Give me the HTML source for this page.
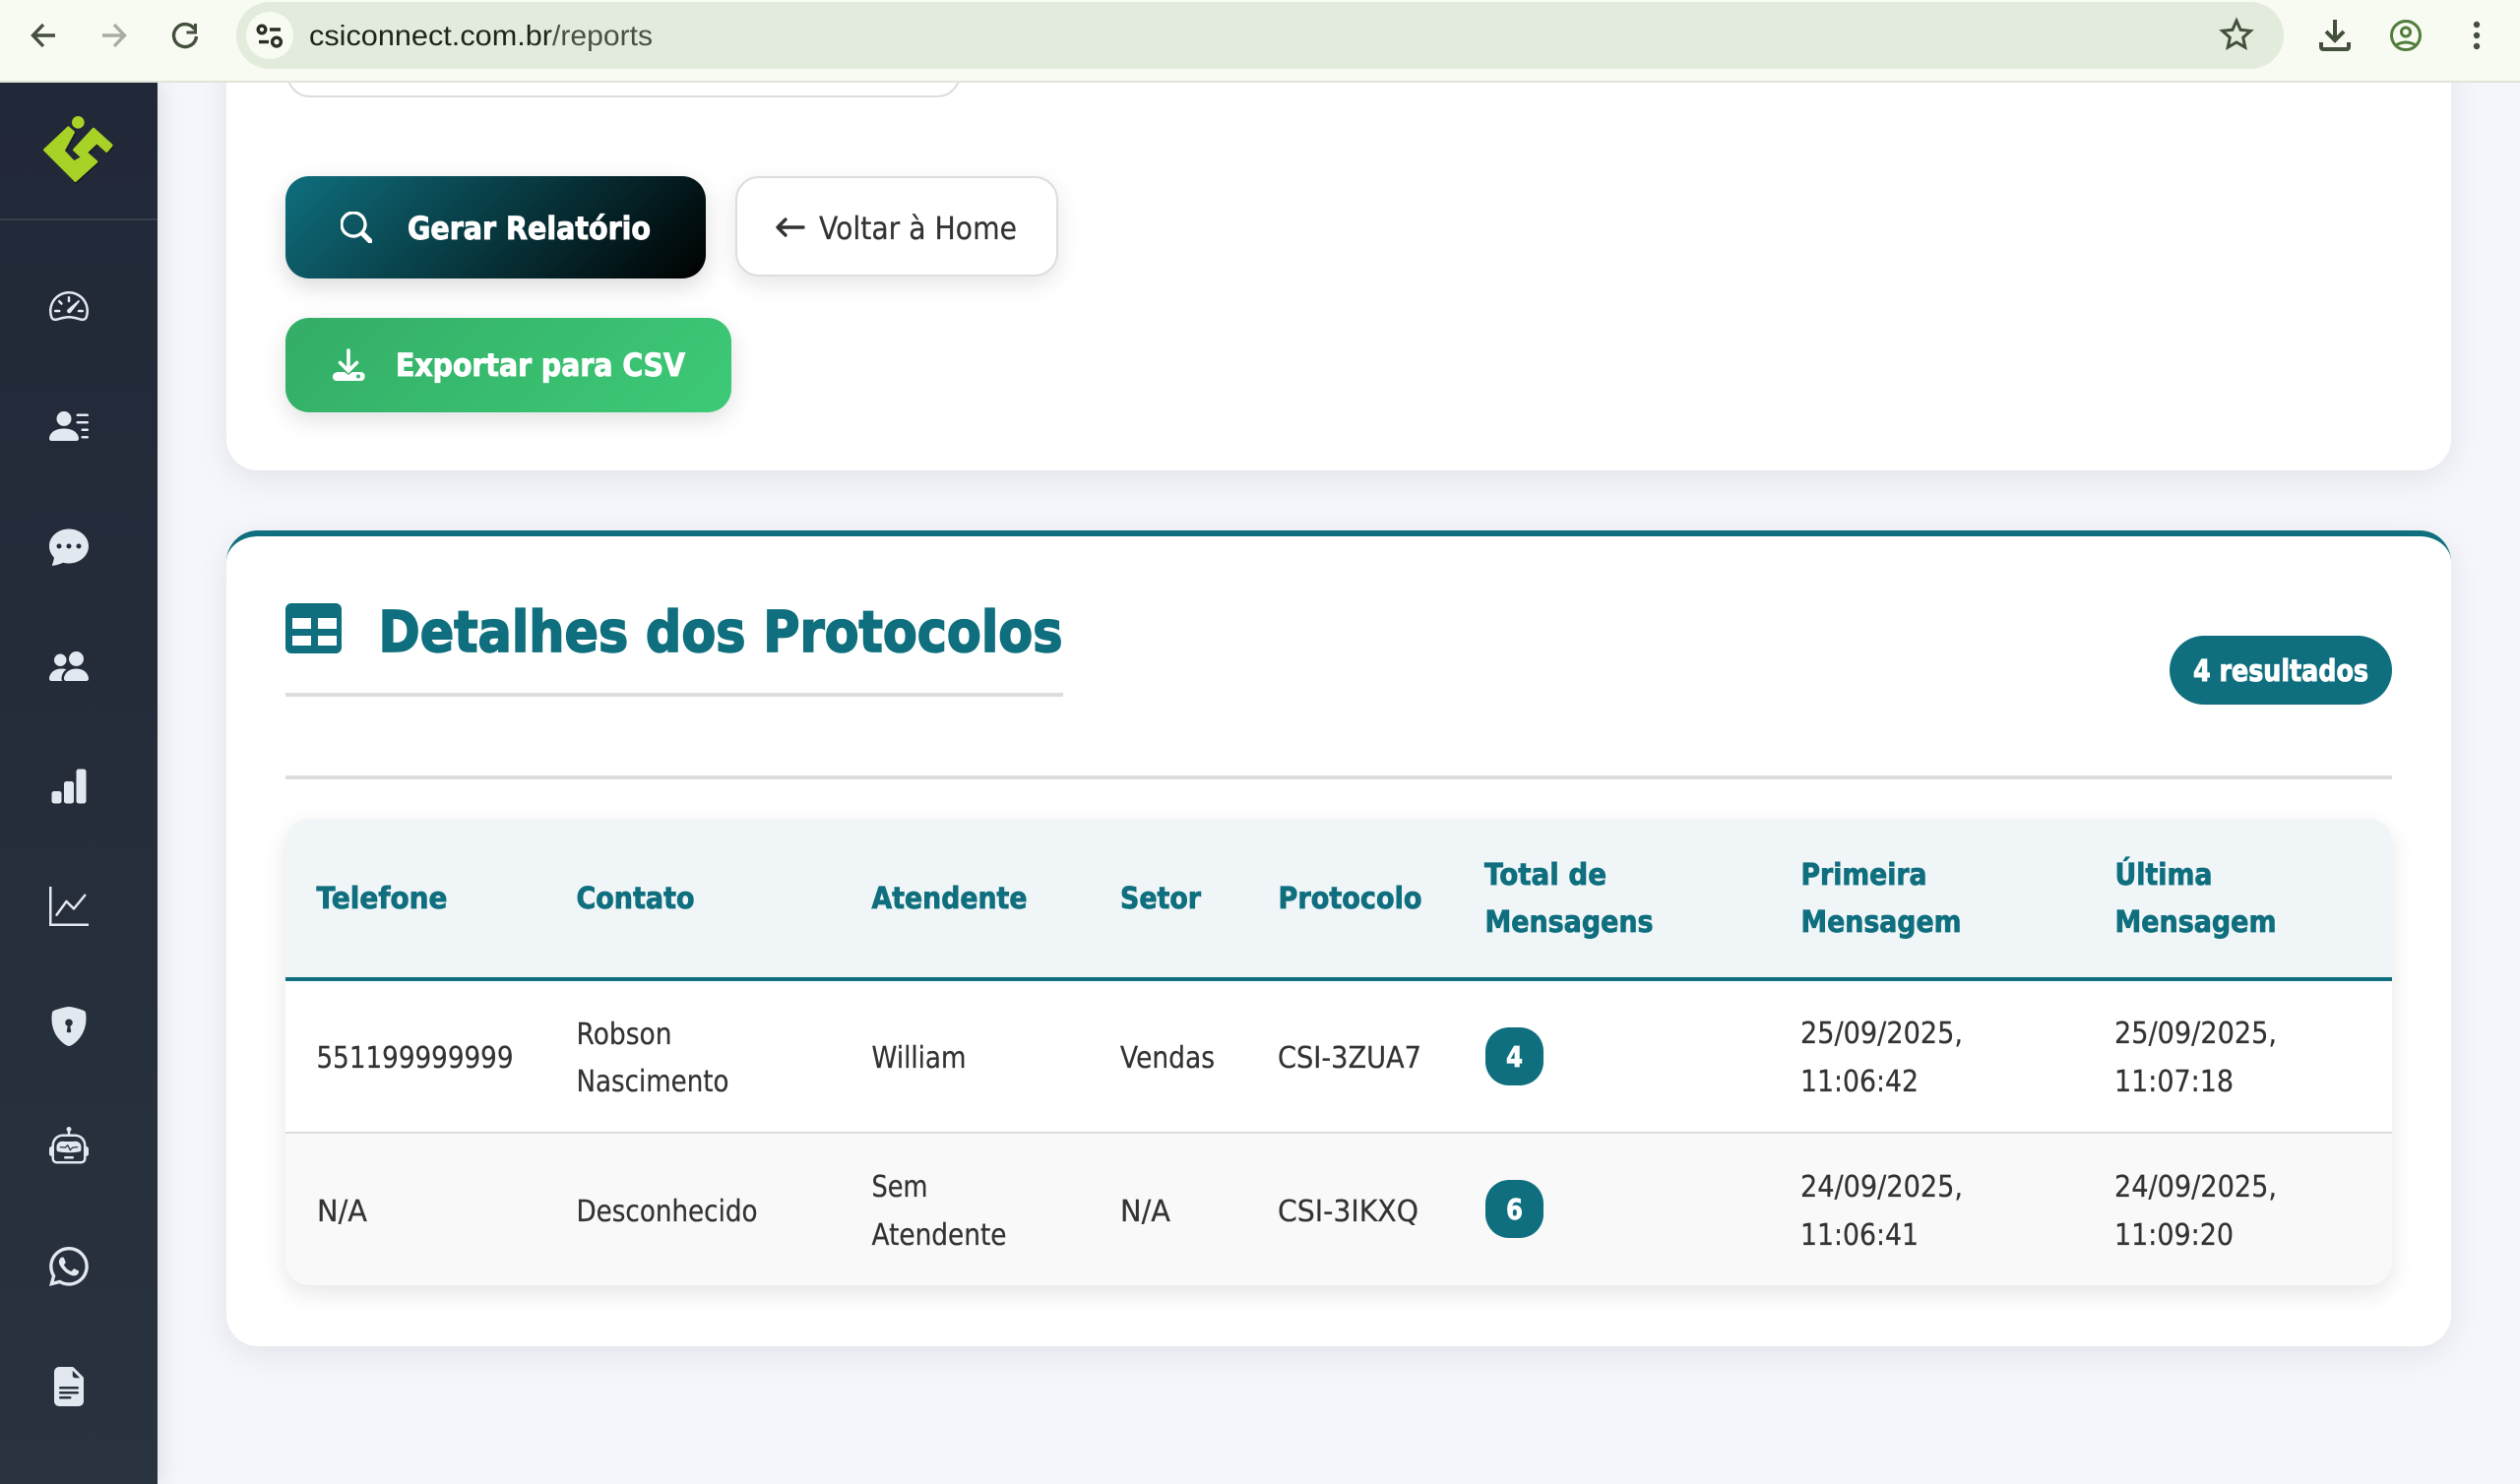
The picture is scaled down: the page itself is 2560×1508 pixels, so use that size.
<!DOCTYPE html>
<html lang="pt-BR"><head><meta charset="utf-8"><title>Relatórios</title>
<style>
html,body{margin:0;padding:0;width:2560px;height:1508px;overflow:hidden;background:#f4f6fb}
div{position:absolute;box-sizing:border-box}
#side{left:0;top:84px;width:160px;height:1424px;background:linear-gradient(180deg,#212837,#29323f);box-shadow:4px 0 20px rgba(0,0,0,.1)}
.card{background:#fff;border-radius:32px;box-shadow:0 8px 32px rgba(0,0,0,.08)}
#c1{left:230px;top:40px;width:2260px;height:438px}
#c2{left:230px;top:539px;width:2260px;height:829px;border-top:6px solid #0f6f7e}
#inp{left:291px;top:40px;width:685px;height:59px;border:2px solid #ddd;border-radius:24px;background:#fff}
#b1{left:290px;top:179px;width:427px;height:104px;border-radius:24px;background:linear-gradient(135deg,#0f6f7e,#000);box-shadow:0 8px 24px rgba(0,0,0,.15)}
#b2{left:747px;top:179px;width:328px;height:102px;border-radius:24px;background:#fff;border:2px solid #ddd;box-shadow:0 8px 24px rgba(0,0,0,.1)}
#b3{left:290px;top:323px;width:453px;height:96px;border-radius:24px;background:linear-gradient(135deg,#33ad67,#3dca76);box-shadow:0 8px 24px rgba(0,0,0,.12)}
#t1{left:290px;top:704px;width:790px;height:4px;background:#ddd}
#t2{left:290px;top:788px;width:2140px;height:4px;background:#ddd}
#pill{left:2204px;top:646px;width:226px;height:70px;border-radius:35px;background:#0f6f7e}
#tbl{left:290px;top:832px;width:2140px;height:474px;border-radius:24px;background:#fff;box-shadow:0 8px 24px rgba(0,0,0,.1);overflow:hidden}
#th{left:0;top:0;width:2140px;height:165px;background:#f0f5f8;border-bottom:4px solid #0f6f7e}
#r2{left:0;top:318px;width:2140px;height:156px;background:#f9f9f9;border-top:2px solid #ddd}
.bd{left:1508.500px;width:59.500px;height:59px;border-radius:24px;background:#0f6f7e}
#bar{left:0;top:0;width:2560px;height:84px;background:#f7fbf1;border-bottom:2px solid #dfe5d6}
#url{left:240px;top:2px;width:2080px;height:68px;border-radius:34px;background:#e3ecdc}
#tune{left:250px;top:12px;width:48px;height:48px;border-radius:50%;background:#f7fbf1}
svg{position:absolute;left:0;top:0}
text{font-family:"DejaVu Sans","Liberation Sans",sans-serif;font-size:30.4px;fill:#333;stroke:#333;stroke-width:.25px;text-rendering:geometricPrecision}
.h{font-weight:700;fill:#0f6f7e;stroke:#0f6f7e;stroke-width:.8px}
.w{font-weight:700;fill:#fff;stroke:#fff;stroke-width:.8px}
.u{font-family:"Liberation Sans",sans-serif;font-size:29px;stroke:none}
</style></head><body>
<div class="card" id="c1"></div>
<div id="inp"></div>
<div id="b1"></div><div id="b2"></div><div id="b3"></div>
<div class="card" id="c2"></div>
<div id="t1"></div><div id="t2"></div><div id="pill"></div>
<div id="tbl"><div id="th"></div><div id="r2"></div></div>
<div class="bd" style="top:1044px"></div><div class="bd" style="top:1199px"></div>
<div id="side"><div style="left:0;top:138px;width:160px;height:2px;background:#373e4b"></div></div>
<div id="bar"></div><div id="url"></div><div id="tune"></div>

<svg width="2560" height="1508" viewBox="0 0 2560 1508" xmlns="http://www.w3.org/2000/svg">
<!-- browser chrome -->
<g fill="none" stroke="#444f3e" stroke-width="3.4">
<path d="M56 36H35M44 25 33.500 36 44 47"/>
<path stroke="#a9ada5" d="M104 36h21M116 25l10.500 11L116 47"/>
<path d="M197.500 29.500A11.500 11.500 0 1 0 199.500 37"/><path stroke-width="3" d="M198.500 24v9h-9"/>
<path stroke="#2a2f26" d="M274 30h11M263 42.600h10"/>
<circle stroke="#2a2f26" cx="266" cy="30" r="3.800"/><circle stroke="#2a2f26" cx="281" cy="42.600" r="4.400"/>
<polygon stroke-width="3" stroke-linejoin="miter" points="2272,21 2276.100,30.300 2286.300,31.400 2278.700,38.200 2280.800,48.100 2272,43 2263.200,48.100 2265.300,38.200 2257.700,31.400 2267.900,30.300"/>
<path stroke-width="4" d="M2372 20v21M2363 32l9 9 9-9M2358 43v5a2 2 0 0 0 2 2h24a2 2 0 0 0 2-2v-5"/>
<g stroke="#527d3c" stroke-width="3"><circle cx="2444" cy="36" r="14.500"/><circle cx="2444" cy="32.500" r="4.500"/><path d="M2433 46.500q11-7 22 0"/></g>
</g>
<g fill="#444f3e"><circle cx="2516" cy="25" r="3.200"/><circle cx="2516" cy="36" r="3.200"/><circle cx="2516" cy="47" r="3.200"/></g>
<text class="u" x="314" y="46" style="fill:#1f241c" textLength="247" lengthAdjust="spacingAndGlyphs">csiconnect.com.br</text>
<text class="u" x="561" y="46" style="fill:#4a5046" textLength="102" lengthAdjust="spacingAndGlyphs">/reports</text>

<!-- logo -->
<g transform="translate(30 105) scale(.3333)">
<path transform="translate(3 4)" fill="#14191f" stroke="#14191f" stroke-width="8" stroke-linejoin="round" d="M118 74 46 142 140 236 204 178 172 150 205 119 235 146 250 128 195 78 136 142 161 165 135 179 103 145 134 88Z"/>
<path fill="#a8d226" stroke="#a8d226" stroke-width="8" stroke-linejoin="round" d="M118 74 46 142 140 236 204 178 172 150 205 119 235 146 250 128 195 78 136 142 161 165 135 179 103 145 134 88Z"/>
<circle cx="148" cy="58" r="19" fill="#a8d226"/>
</g>

<!-- sidebar icons -->
<g fill="#e2e8f0">
<svg x="50" y="291" width="40" height="40" viewBox="0 0 16 16"><path d="M8 4a.5.5 0 0 1 .5.5V6a.5.5 0 0 1-1 0V4.500A.5.5 0 0 1 8 4zM3.732 5.732a.5.5 0 0 1 .707 0l.915.914a.5.5 0 1 1-.708.708l-.914-.915a.5.5 0 0 1 0-.707zM2 10a.5.5 0 0 1 .5-.5h1.586a.5.5 0 0 1 0 1H2.500A.5.5 0 0 1 2 10zm9.500 0a.5.5 0 0 1 .5-.5h1.500a.5.5 0 0 1 0 1H12a.5.5 0 0 1-.5-.5zm.754-4.246a.389.389 0 0 0-.527-.02L7.547 9.310a.91.91 0 1 0 1.302 1.258l3.434-4.297a.389.389 0 0 0-.029-.518z"/><path fill-rule="evenodd" d="M0 10a8 8 0 1 1 15.547 2.661c-.442 1.253-1.845 1.602-2.932 1.250C11.309 13.488 9.475 13 8 13c-1.474 0-3.310.488-4.615.911-1.087.352-2.490.003-2.932-1.250A7.988 7.988 0 0 1 0 10zm8-7a7 7 0 0 0-6.603 9.329c.203.575.923.876 1.680.630C4.397 12.533 6.358 12 8 12s3.604.532 4.923.96c.757.245 1.477-.056 1.680-.631A7 7 0 0 0 8 3z"/></svg>
<svg x="50" y="413" width="40" height="40" viewBox="0 0 16 16"><path d="M6 8a3 3 0 1 0 0-6 3 3 0 0 0 0 6zm-5 6s-1 0-1-1 1-4 6-4 6 3 6 4-1 1-1 1H1zM11 3.500a.5.5 0 0 1 .5-.5h4a.5.5 0 0 1 0 1h-4a.5.5 0 0 1-.5-.5zm.5 2.500a.5.5 0 0 0 0 1h4a.5.5 0 0 0 0-1h-4zm2 3a.5.5 0 0 0 0 1h2a.5.5 0 0 0 0-1h-2zm0 3a.5.5 0 0 0 0 1h2a.5.5 0 0 0 0-1h-2z"/></svg>
<svg x="50" y="535" width="40" height="40" viewBox="0 0 16 16"><path d="M16 8c0 3.866-3.582 7-8 7a9.060 9.060 0 0 1-2.347-.306c-.584.296-1.925.864-4.181 1.234-.2.032-.352-.176-.273-.362.354-.836.674-1.950.770-2.966C.744 11.370 0 9.760 0 8c0-3.866 3.582-7 8-7s8 3.134 8 7zM5 8a1 1 0 1 0-2 0 1 1 0 0 0 2 0zm4 0a1 1 0 1 0-2 0 1 1 0 0 0 2 0zm3 1a1 1 0 1 0 0-2 1 1 0 0 0 0 2z"/></svg>
<svg x="50" y="657" width="40" height="40" viewBox="0 0 16 16"><path d="M7 14s-1 0-1-1 1-4 5-4 5 3 5 4-1 1-1 1H7zm4-6a3 3 0 1 0 0-6 3 3 0 0 0 0 6zm-5.784 6A2.238 2.238 0 0 1 5 13c0-1.355.68-2.750 1.936-3.720A6.325 6.325 0 0 0 5 9c-4 0-5 3-5 4s1 1 1 1h4.216zM4.500 8a2.500 2.500 0 1 0 0-5 2.500 2.500 0 0 0 0 5z"/></svg>
<svg x="50" y="779" width="40" height="40" viewBox="0 0 16 16"><path d="M1 11a1 1 0 0 1 1-1h2a1 1 0 0 1 1 1v3a1 1 0 0 1-1 1H2a1 1 0 0 1-1-1v-3zm5-4a1 1 0 0 1 1-1h2a1 1 0 0 1 1 1v7a1 1 0 0 1-1 1H7a1 1 0 0 1-1-1V7zm5-5a1 1 0 0 1 1-1h2a1 1 0 0 1 1 1v12a1 1 0 0 1-1 1h-2a1 1 0 0 1-1-1V2z"/></svg>
<svg x="50" y="901" width="40" height="40" viewBox="0 0 16 16"><path fill-rule="evenodd" d="M0 0h1v15h15v1H0V0Zm14.817 3.113a.5.5 0 0 1 .07.704l-4.500 5.500a.5.5 0 0 1-.74.037L7.060 6.767l-3.656 5.027a.5.5 0 0 1-.808-.588l4-5.500a.5.5 0 0 1 .758-.06l2.609 2.610 4.150-5.073a.5.5 0 0 1 .704-.07Z"/></svg>
<svg x="50" y="1023" width="40" height="40" viewBox="0 0 16 16"><path fill-rule="evenodd" d="M8 0c-.69 0-1.843.265-2.928.56-1.110.3-2.229.655-2.887.87a1.540 1.540 0 0 0-1.044 1.262c-.596 4.477.787 7.795 2.465 9.990a11.777 11.777 0 0 0 2.517 2.453c.386.273.744.482 1.048.625.28.132.581.24.829.24s.548-.108.829-.24a7.159 7.159 0 0 0 1.048-.625 11.775 11.775 0 0 0 2.517-2.453c1.678-2.195 3.061-5.513 2.465-9.990a1.541 1.541 0 0 0-1.044-1.263 62.467 62.467 0 0 0-2.887-.87C9.843.266 8.690 0 8 0zm0 5a1.500 1.500 0 0 1 .5 2.915l.385 1.990a.5.5 0 0 1-.491.595h-.788a.5.5 0 0 1-.49-.595l.384-1.990A1.500 1.500 0 0 1 8 5z"/></svg>
<svg x="50" y="1145" width="40" height="40" viewBox="0 0 16 16"><path d="M6 12.500a.5.5 0 0 1 .5-.5h3a.5.5 0 0 1 0 1h-3a.5.5 0 0 1-.5-.5ZM3 8.062C3 6.760 4.235 5.765 5.530 5.886a26.580 26.580 0 0 0 4.940 0C11.765 5.765 13 6.760 13 8.062v1.157a.933.933 0 0 1-.765.935c-.845.147-2.340.346-4.235.346-1.895 0-3.390-.2-4.235-.346A.933.933 0 0 1 3 9.219V8.062Zm4.542-.827a.25.25 0 0 0-.217.068l-.92.9a24.767 24.767 0 0 1-1.871-.183.25.25 0 0 0-.068.495c.55.076 1.232.149 2.020.193a.25.25 0 0 0 .189-.071l.754-.736.847 1.710a.25.25 0 0 0 .404.062l.932-.97a25.286 25.286 0 0 0 1.922-.188.25.25 0 0 0-.068-.495c-.538.074-1.207.145-1.980.189a.25.25 0 0 0-.166.076l-.754.785-.842-1.700a.25.25 0 0 0-.182-.135Z"/><path d="M8.500 1.866a1 1 0 1 0-1 0V3h-2A4.500 4.500 0 0 0 1 7.500V8a1 1 0 0 0-1 1v2a1 1 0 0 0 1 1v1a2 2 0 0 0 2 2h10a2 2 0 0 0 2-2v-1a1 1 0 0 0 1-1V9a1 1 0 0 0-1-1v-.5A4.500 4.500 0 0 0 10.500 3h-2V1.866ZM14 7.500V13a1 1 0 0 1-1 1H3a1 1 0 0 1-1-1V7.500A3.500 3.500 0 0 1 5.500 4h5A3.500 3.500 0 0 1 14 7.500Z"/></svg>
<svg x="50" y="1267" width="40" height="40" viewBox="0 0 16 16"><path d="M13.601 2.326A7.854 7.854 0 0 0 7.994 0C3.627 0 .068 3.558.064 7.926c0 1.399.366 2.760 1.057 3.965L0 16l4.204-1.102a7.933 7.933 0 0 0 3.790.965h.004c4.368 0 7.926-3.558 7.930-7.930A7.898 7.898 0 0 0 13.600 2.326zM7.994 14.521a6.573 6.573 0 0 1-3.356-.92l-.24-.144-2.494.654.666-2.433-.156-.251a6.560 6.560 0 0 1-1.007-3.505c0-3.626 2.957-6.584 6.591-6.584a6.560 6.560 0 0 1 4.660 1.931 6.557 6.557 0 0 1 1.928 4.660c-.004 3.639-2.961 6.592-6.592 6.592zm3.615-4.934c-.197-.099-1.170-.578-1.353-.646-.182-.065-.315-.099-.445.099-.133.197-.513.646-.627.775-.114.133-.232.148-.43.05-.197-.1-.836-.308-1.592-.985-.59-.525-.985-1.175-1.103-1.372-.114-.198-.011-.304.088-.403.087-.088.197-.232.296-.346.1-.114.133-.198.198-.33.065-.134.034-.248-.015-.347-.05-.099-.445-1.076-.612-1.470-.16-.389-.323-.335-.445-.34-.114-.007-.247-.007-.38-.007a.729.729 0 0 0-.529.247c-.182.198-.691.677-.691 1.654 0 .977.71 1.916.81 2.049.098.133 1.394 2.132 3.383 2.992.47.205.84.326 1.129.418.475.152.904.129 1.246.08.38-.058 1.171-.48 1.338-.943.164-.464.164-.86.114-.943-.049-.084-.182-.133-.38-.232z"/></svg>
<svg x="50" y="1389" width="40" height="40" viewBox="0 0 16 16"><path d="M9.293 0H4a2 2 0 0 0-2 2v12a2 2 0 0 0 2 2h8a2 2 0 0 0 2-2V4.707A1 1 0 0 0 13.707 4L10 .293A1 1 0 0 0 9.293 0zM9.500 3.500v-2l3 3h-2a1 1 0 0 1-1-1zM4.500 9a.5.5 0 0 1 0-1h7a.5.5 0 0 1 0 1h-7zM4 10.500a.5.5 0 0 1 .5-.5h7a.5.5 0 0 1 0 1h-7a.5.5 0 0 1-.5-.5zm.5 2.500a.5.5 0 0 1 0-1h4a.5.5 0 0 1 0 1h-4z"/></svg>
</g>

<!-- buttons -->
<svg x="346" y="215" width="32" height="32" viewBox="0 0 16 16" fill="#fff"><path d="M11.742 10.344a6.500 6.500 0 1 0-1.397 1.398h-.001c.03.04.062.078.098.115l3.850 3.850a1 1 0 0 0 1.415-1.414l-3.850-3.850a1.007 1.007 0 0 0-.115-.1zM12 6.500a5.500 5.500 0 1 1-11 0 5.500 5.500 0 0 1 11 0z" stroke="#fff" stroke-width=".6"/></svg>
<text class="w" x="414" y="243" style="font-size:32px;stroke-width:1px" textLength="247" lengthAdjust="spacingAndGlyphs">Gerar Relatório</text>
<svg x="787" y="215" width="32" height="32" viewBox="0 0 16 16" fill="#333"><path fill-rule="evenodd" stroke="#333" stroke-width=".7" d="M15 8a.5.5 0 0 0-.5-.5H2.707l3.147-3.146a.5.5 0 1 0-.708-.708l-4 4a.5.5 0 0 0 0 .708l4 4a.5.5 0 0 0 .708-.708L2.707 8.500H14.500A.5.5 0 0 0 15 8z"/></svg>
<text x="832" y="243" style="font-size:32px" textLength="201" lengthAdjust="spacingAndGlyphs">Voltar à Home</text>
<g>
<path d="M354 356v21M345.500 368.500l8.500 8.500 8.500-8.500" fill="none" stroke="#fff" stroke-width="3.600" stroke-linecap="round"/>
<path d="M342 378h8l4 3 4-3h8.600a4 4 0 0 1 4 4.500v.5a4 4 0 0 1-4 4H342a4 4 0 0 1-4-4v-.5a4 4 0 0 1 4-4z" fill="#fff"/>
<circle cx="364" cy="382.500" r="2" fill="#37b86c"/>
</g>
<text class="w" x="402" y="382" style="font-size:32px;stroke-width:1px" textLength="294" lengthAdjust="spacingAndGlyphs">Exportar para CSV</text>

<!-- heading -->
<path fill="#0f6f7e" fill-rule="evenodd" d="M296 613h45a6 6 0 0 1 6 6v39a6 6 0 0 1-6 6h-45a6 6 0 0 1-6-6v-39a6 6 0 0 1 6-6zM297 628v11h19v-11zM323 628v11h19v-11zM297 646v10h19v-10zM323 646v10h19v-10z"/>
<text class="h" x="384.500" y="662" style="font-size:57.600px;stroke-width:1.800px" textLength="695" lengthAdjust="spacingAndGlyphs">Detalhes dos Protocolos</text>
<text class="w" x="2228" y="692" style="stroke-width:1px" textLength="178" lengthAdjust="spacingAndGlyphs">4 resultados</text>

<!-- table header -->
<text class="h" x="321.500" y="923" textLength="133" lengthAdjust="spacingAndGlyphs">Telefone</text>
<text class="h" x="585.500" y="923" textLength="120" lengthAdjust="spacingAndGlyphs">Contato</text>
<text class="h" x="885.500" y="923" textLength="158" lengthAdjust="spacingAndGlyphs">Atendente</text>
<text class="h" x="1138" y="923" textLength="82" lengthAdjust="spacingAndGlyphs">Setor</text>
<text class="h" x="1298.500" y="923" textLength="146" lengthAdjust="spacingAndGlyphs">Protocolo</text>
<text class="h" x="1508" y="899" textLength="124" lengthAdjust="spacingAndGlyphs">Total de</text>
<text class="h" x="1508.500" y="947" textLength="171" lengthAdjust="spacingAndGlyphs">Mensagens</text>
<text class="h" x="1829.500" y="899" textLength="128" lengthAdjust="spacingAndGlyphs">Primeira</text>
<text class="h" x="1829.500" y="947" textLength="163" lengthAdjust="spacingAndGlyphs">Mensagem</text>
<text class="h" x="2148.500" y="899" textLength="99" lengthAdjust="spacingAndGlyphs">Última</text>
<text class="h" x="2148.500" y="947" textLength="164" lengthAdjust="spacingAndGlyphs">Mensagem</text>

<!-- row 1 -->
<text x="321.500" y="1085" textLength="200" lengthAdjust="spacingAndGlyphs">551199999999</text>
<text x="585.500" y="1061" textLength="97" lengthAdjust="spacingAndGlyphs">Robson</text>
<text x="585.500" y="1109" textLength="155" lengthAdjust="spacingAndGlyphs">Nascimento</text>
<text x="885.500" y="1085" textLength="96" lengthAdjust="spacingAndGlyphs">William</text>
<text x="1138" y="1085" textLength="96" lengthAdjust="spacingAndGlyphs">Vendas</text>
<text x="1298" y="1085" textLength="146" lengthAdjust="spacingAndGlyphs">CSI-3ZUA7</text>
<text class="w" x="1530" y="1084" style="font-size:28.800px" textLength="17" lengthAdjust="spacingAndGlyphs">4</text>
<text x="1829" y="1060" textLength="165" lengthAdjust="spacingAndGlyphs">25/09/2025,</text>
<text x="1829" y="1109" textLength="120" lengthAdjust="spacingAndGlyphs">11:06:42</text>
<text x="2148" y="1060" textLength="165" lengthAdjust="spacingAndGlyphs">25/09/2025,</text>
<text x="2148" y="1109" textLength="121" lengthAdjust="spacingAndGlyphs">11:07:18</text>

<!-- row 2 -->
<text x="322" y="1241" textLength="51" lengthAdjust="spacingAndGlyphs">N/A</text>
<text x="585.500" y="1241" textLength="184" lengthAdjust="spacingAndGlyphs">Desconhecido</text>
<text x="885.500" y="1216" textLength="57" lengthAdjust="spacingAndGlyphs">Sem</text>
<text x="885.500" y="1265" textLength="137" lengthAdjust="spacingAndGlyphs">Atendente</text>
<text x="1138" y="1241" textLength="51" lengthAdjust="spacingAndGlyphs">N/A</text>
<text x="1298" y="1241" textLength="143" lengthAdjust="spacingAndGlyphs">CSI-3IKXQ</text>
<text class="w" x="1530" y="1239" style="font-size:28.800px" textLength="17" lengthAdjust="spacingAndGlyphs">6</text>
<text x="1829" y="1216" textLength="165" lengthAdjust="spacingAndGlyphs">24/09/2025,</text>
<text x="1829" y="1265" textLength="120" lengthAdjust="spacingAndGlyphs">11:06:41</text>
<text x="2148" y="1216" textLength="165" lengthAdjust="spacingAndGlyphs">24/09/2025,</text>
<text x="2148" y="1265" textLength="121" lengthAdjust="spacingAndGlyphs">11:09:20</text>
</svg>
</body></html>
